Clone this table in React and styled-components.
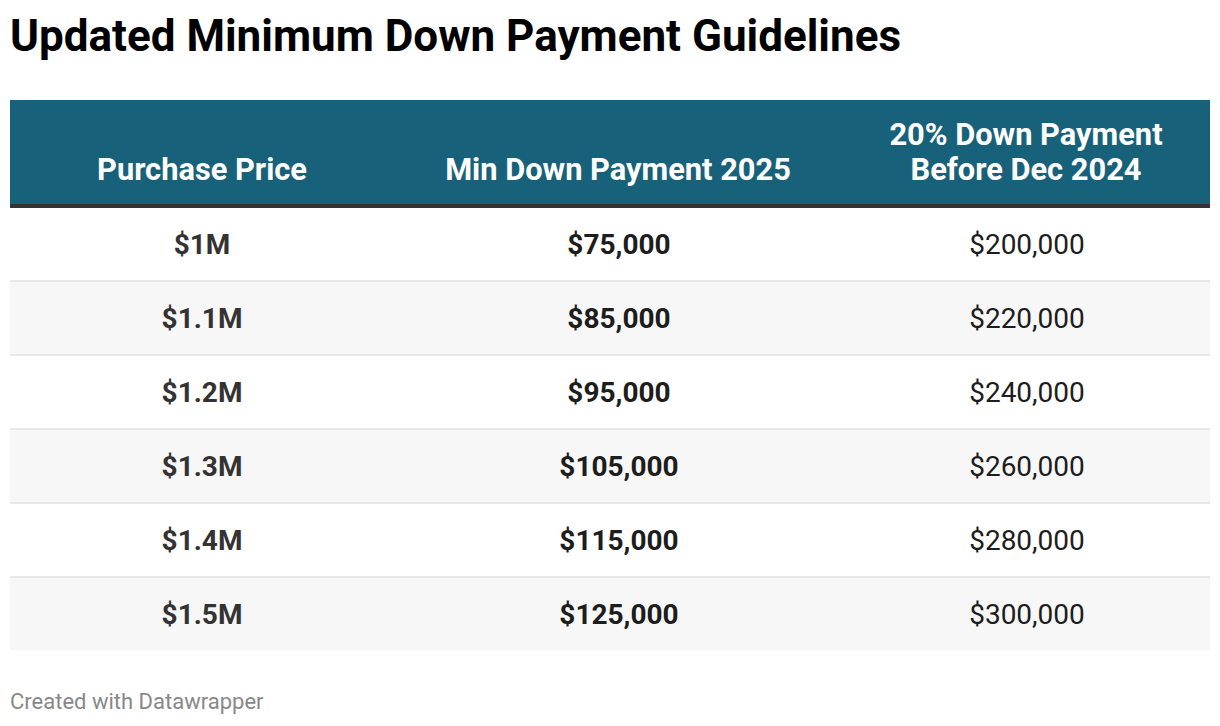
import React from "react";
import styled, { createGlobalStyle } from "styled-components";

const Global = createGlobalStyle`
  html, body { margin: 0; padding: 0; background: #fff; }
  body { font-family: Roboto, "Liberation Sans", sans-serif; }
`;

const Page = styled.div`
  padding: 0 10px;
  width: 1200px;
`;

const Title = styled.h1`
  margin: 0;
  padding-top: 10px;
  font-size: 44px;
  line-height: 52px;
  font-weight: 700;
  color: #000;
`;

const Table = styled.div`
  margin-top: 38px;
  display: grid;
  grid-template-columns: 384px 448px 368px;
`;

const HeadCell = styled.div`
  background: #17627a;
  color: #fff;
  font-weight: 700;
  font-size: 30.8px;
  line-height: 35px;
  text-align: center;
  box-sizing: border-box;
  height: 108px;
  display: flex;
  align-items: flex-end;
  justify-content: center;
  padding-bottom: 17px;
  border-bottom: 4px solid #333;
`;

const colColors = ["#333", "#1d1d1d", "#1d1d1d"];

const Cell = styled.div`
  background: ${(p) => (p.$shaded ? "#f7f7f7" : "#fff")};
  border-top: ${(p) => (p.$first ? "none" : "2px solid #e8e8e8")};
  height: ${(p) => (p.$first ? "72px" : "74px")};
  box-sizing: border-box;
  display: flex;
  align-items: center;
  justify-content: center;
  padding-left: ${(p) => (p.$col === 0 ? "0" : "2px")};
  font-size: 28px;
  font-weight: ${(p) => (p.$col < 2 ? 700 : 400)};
  color: ${(p) => colColors[p.$col]};
`;

const Footer = styled.div`
  margin-top: 39px;
  font-size: 22px;
  color: #888;
`;

const rows = [
  ["$1M", "$75,000", "$200,000"],
  ["$1.1M", "$85,000", "$220,000"],
  ["$1.2M", "$95,000", "$240,000"],
  ["$1.3M", "$105,000", "$260,000"],
  ["$1.4M", "$115,000", "$280,000"],
  ["$1.5M", "$125,000", "$300,000"],
];

export default function App() {
  return (
    <Page>
      <Global />
      <Title>Updated Minimum Down Payment Guidelines</Title>
      <Table>
        <HeadCell>Purchase Price</HeadCell>
        <HeadCell>Min Down Payment 2025</HeadCell>
        <HeadCell>
          20% Down Payment
          <br />
          Before Dec 2024
        </HeadCell>
        {rows.map((r, i) =>
          r.map((v, j) => (
            <Cell key={`${i}-${j}`} $shaded={i % 2 === 1} $first={i === 0} $col={j}>
              {v}
            </Cell>
          ))
        )}
      </Table>
      <Footer>Created with Datawrapper</Footer>
    </Page>
  );
}
